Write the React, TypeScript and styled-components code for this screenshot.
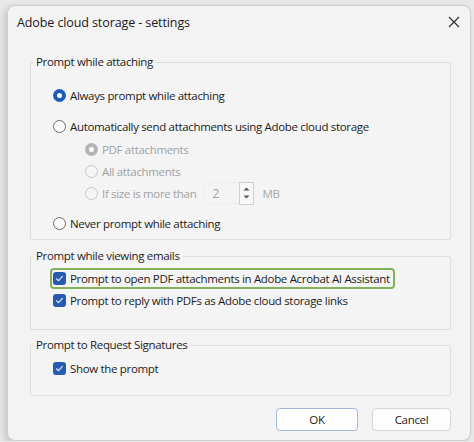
import React from "react";
import styled, { createGlobalStyle } from "styled-components";

const GlobalStyle = createGlobalStyle`
  html, body {
    margin: 0;
    padding: 0;
    background: #e8e8e8;
  }
  body {
    font-family: "Open Sans", "Noto Sans", sans-serif;
    font-size: 11.5px;
    letter-spacing: -0.33px;
    color: #1c1c1c;
  }
`;

const Dialog = styled.div`
  box-sizing: border-box;
  margin: 5px 0 0 7px;
  width: 464px;
  height: 436px;
  background: #f3f3f3;
  border: 1px solid #cdcdcd;
  border-radius: 8px;
  box-shadow: -3px 2px 6px rgba(0, 0, 0, 0.14);
  display: flex;
  flex-direction: column;
`;

const TitleBar = styled.div`
  display: flex;
  align-items: center;
  justify-content: space-between;
  height: 32px;
  padding: 0 9px 0 9px;
  font-size: 12.5px;
  letter-spacing: -0.1px;
  color: #1a1a1a;
`;

const CloseButton = styled.button`
  border: none;
  background: transparent;
  padding: 0;
  width: 14px;
  height: 14px;
  display: flex;
  align-items: center;
  justify-content: center;
  color: #333;
`;

const Body = styled.div`
  flex: 1;
  display: flex;
  flex-direction: column;
  padding: 16px 19px 0 22px;
`;

const Group = styled.fieldset<{ $mt?: number; $pt: number; $pb: number }>`
  margin: ${(p) => p.$mt ?? 0}px 0 0 0;
  padding: ${(p) => p.$pt}px 0 ${(p) => p.$pb}px 0;
  border: 1px solid #dedede;
  border-radius: 2px;
  min-width: 0;
  background: #f4f4f4;
`;

const Legend = styled.legend`
  padding: 0 3px;
  margin-left: 2px;
  line-height: 16px;
  color: #1c1c1c;
`;

const Row = styled.div<{ $indent?: number; $mt?: number; $disabled?: boolean }>`
  display: flex;
  align-items: center;
  height: 22px;
  margin-top: ${(p) => p.$mt ?? 0}px;
  padding-left: ${(p) => p.$indent ?? 22}px;
  color: ${(p) => (p.$disabled ? "#a2a2a2" : "#1c1c1c")};
  gap: 4px;
  white-space: nowrap;
`;

const RadioDot = styled.span<{ $checked?: boolean; $disabled?: boolean }>`
  box-sizing: border-box;
  width: 13px;
  height: 13px;
  border-radius: 50%;
  flex: none;
  display: flex;
  align-items: center;
  justify-content: center;
  background: ${(p) =>
    p.$checked ? (p.$disabled ? "#b4b4b4" : "#1d5bb6") : p.$disabled ? "#f5f5f5" : "#fbfbfb"};
  border: 1px solid
    ${(p) => (p.$checked ? "transparent" : p.$disabled ? "#c6c6c6" : "#6c6c6c")};

  &::after {
    content: "";
    display: ${(p) => (p.$checked ? "block" : "none")};
    width: 5px;
    height: 5px;
    border-radius: 50%;
    background: #fff;
  }
`;

const CheckBox = styled.span`
  width: 13px;
  height: 13px;
  border-radius: 3px;
  background: #275bb2;
  flex: none;
  display: flex;
  align-items: center;
  justify-content: center;
`;

const FocusRing = styled.span`
  display: inline-flex;
  align-items: center;
  gap: 4px;
  height: 17px;
  margin-left: -3px;
  padding: 0 3px 0 1px;
  border: 2px solid #82b35c;
  border-radius: 4px;
`;

const Spin = styled.span`
  display: flex;
  align-items: center;
  margin-left: 4px;
`;

const SpinInput = styled.span`
  box-sizing: border-box;
  width: 35px;
  height: 22px;
  padding-left: 7px;
  display: flex;
  align-items: center;
  color: #a2a2a2;
  font-size: 12px;
  border: 1px solid #ededed;
  border-right: none;
`;

const SpinButtons = styled.span`
  box-sizing: border-box;
  width: 15px;
  height: 23px;
  border: 1px solid #cfcfcf;
  background: #f7f7f7;
  display: flex;
  flex-direction: column;
  align-items: center;
  justify-content: space-around;
  padding: 3px 0;
`;

const Unit = styled.span`
  margin-left: 4px;
  color: #a8a8a8;
`;

const Footer = styled.div`
  display: flex;
  justify-content: flex-end;
  gap: 14px;
  margin-top: 12px;
`;

const Button = styled.button<{ $primary?: boolean; $w: number }>`
  box-sizing: border-box;
  width: ${(p) => p.$w}px;
  height: 23px;
  font-family: inherit;
  font-size: 11.5px;
  letter-spacing: inherit;
  color: #1c1c1c;
  background: #fdfdfd;
  border: 1px solid ${(p) => (p.$primary ? "#9fbad8" : "#d6d6d6")};
  border-radius: 4px;
  padding: 0;
`;

const Check = () => (
  <svg width="9" height="9" viewBox="0 0 9 9">
    <path d="M1.6 4.8 L3.6 6.7 L7.4 2.4" fill="none" stroke="#dfe8f7" strokeWidth="1.2" strokeLinecap="round" strokeLinejoin="round" />
  </svg>
);

const Arrow = ({ up }: { up?: boolean }) => (
  <svg width="7" height="4" viewBox="0 0 7 4">
    <path d={up ? "M0.5 3.5 L3.5 0.5 L6.5 3.5 Z" : "M0.5 0.5 L3.5 3.5 L6.5 0.5 Z"} fill="#555" />
  </svg>
);

export default function App() {
  return (
    <>
      <GlobalStyle />
      <Dialog>
        <TitleBar>
          <span>Adobe cloud storage - settings</span>
          <CloseButton aria-label="Close">
            <svg width="12" height="12" viewBox="0 0 12 12">
              <path d="M1 1 L11 11 M11 1 L1 11" stroke="#2a2a2a" strokeWidth="1.1" />
            </svg>
          </CloseButton>
        </TitleBar>
        <Body>
          <Group $pt={14} $pb={5}>
            <Legend>Prompt while attaching</Legend>
            <Row>
              <RadioDot $checked />
              Always prompt while attaching
            </Row>
            <Row $mt={9}>
              <RadioDot />
              Automatically send attachments using Adobe cloud storage
            </Row>
            <Row $indent={54} $mt={1} $disabled>
              <RadioDot $checked $disabled />
              PDF attachments
            </Row>
            <Row $indent={54} $disabled>
              <RadioDot $disabled />
              All attachments
            </Row>
            <Row $indent={54} $disabled>
              <RadioDot $disabled />
              If size is more than
              <Spin>
                <SpinInput>2</SpinInput>
                <SpinButtons>
                  <Arrow up />
                  <Arrow />
                </SpinButtons>
              </Spin>
              <Unit>MB</Unit>
            </Row>
            <Row $mt={8}>
              <RadioDot />
              Never prompt while attaching
            </Row>
          </Group>

          <Group $mt={8} $pt={3} $pb={18}>
            <Legend>Prompt while viewing emails</Legend>
            <Row>
              <FocusRing>
                <CheckBox>
                  <Check />
                </CheckBox>
                Prompt to open PDF attachments in Adobe Acrobat AI Assistant
              </FocusRing>
            </Row>
            <Row>
              <CheckBox>
                <Check />
              </CheckBox>
              Prompt to reply with PDFs as Adobe cloud storage links
            </Row>
          </Group>

          <Group $mt={7} $pt={4} $pb={16}>
            <Legend>Prompt to Request Signatures</Legend>
            <Row>
              <CheckBox>
                <Check />
              </CheckBox>
              Show the prompt
            </Row>
          </Group>

          <Footer>
            <Button $primary $w={82}>OK</Button>
            <Button $w={79}>Cancel</Button>
          </Footer>
        </Body>
      </Dialog>
    </>
  );
}
